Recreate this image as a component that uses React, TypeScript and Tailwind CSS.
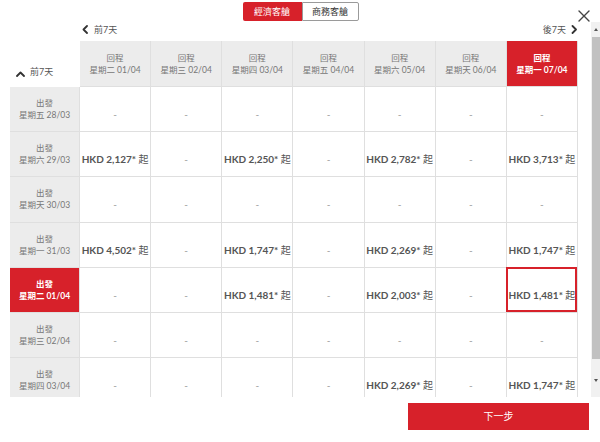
import type { ReactNode } from "react";

const RED = "bg-[#d7212a]";

const returnDates = ["星期二 01/04", "星期三 02/04", "星期四 03/04", "星期五 04/04", "星期六 05/04", "星期天 06/04", "星期一 07/04"];

const rows: { date: string; prices: (string | null)[] }[] = [
  { date: "星期五 28/03", prices: [null, null, null, null, null, null, null] },
  { date: "星期六 29/03", prices: ["2,127", null, "2,250", null, "2,782", null, "3,713"] },
  { date: "星期天 30/03", prices: [null, null, null, null, null, null, null] },
  { date: "星期一 31/03", prices: ["4,502", null, "1,747", null, "2,269", null, "1,747"] },
  { date: "星期二 01/04", prices: [null, null, "1,481", null, "2,003", null, "1,481"] },
  { date: "星期三 02/04", prices: [null, null, null, null, null, null, null] },
  { date: "星期四 03/04", prices: [null, null, null, null, "2,269", null, "1,747"] },
];

const SELECTED_ROW = 4;
const SELECTED_COL = 6;

function Chevron({ dir }: { dir: "left" | "right" | "up" }) {
  const pts = dir === "left" ? "5,1 1.5,4.5 5,8" : dir === "right" ? "1.5,1 5,4.5 1.5,8" : "1,5 4.5,1.5 8,5";
  const w = dir === "up" ? 9 : 7;
  const h = dir === "up" ? 7 : 9;
  return (
    <svg width={w} height={h} viewBox={`0 0 ${w} ${h}`} className="shrink-0">
      <polyline points={pts} fill="none" stroke="#333" strokeWidth="1.8" strokeLinecap="round" strokeLinejoin="round" />
    </svg>
  );
}

function Cell({ children, className = "" }: { children?: ReactNode; className?: string }) {
  return (
    <div className={`box-border flex flex-col items-center border-r border-b border-[#dfdfdf] ${className}`}>
      {children}
    </div>
  );
}

export default function App() {
  return (
    <div
      className="relative w-[600px] h-[442px] overflow-hidden bg-white text-[#666]"
      style={{ fontFamily: "Lato, 'Noto Sans CJK TC', sans-serif" }}
    >
      {/* cabin tabs */}
      <div className="flex h-[22px] justify-center pt-[2px] pl-[1px]">
        <div className={`flex h-[19px] w-[59px] items-center justify-center rounded-l-[2px] ${RED} text-[9px] text-white`}>經濟客艙</div>
        <div className="box-border flex h-[19px] w-[57px] items-center justify-center rounded-r-[2px] border border-[#9a9a9a] bg-white text-[9px] text-[#333]">商務客艙</div>
      </div>

      <button className="absolute right-[10px] top-[10px] h-[12px] w-[12px]" aria-label="close">
        <svg width="12" height="12" viewBox="0 0 12 12">
          <path d="M1 1 L11 11 M11 1 L1 11" stroke="#444" strokeWidth="1.4" strokeLinecap="round" />
        </svg>
      </button>

      <div className="flex h-[375px]">
        <div className="flex-1 overflow-hidden pl-[10px]">
          {/* week navigation */}
          <div className="flex h-[19px] w-[568px] items-center pb-[4px]">
            <div className="w-[72px]" />
            <div className="flex flex-1 items-center justify-between text-[9px] text-[#555]">
              <div className="flex items-center gap-[5px]">
                <Chevron dir="left" />
                <span>前7天</span>
              </div>
              <div className="flex items-center gap-[5px]">
                <span>後7天</span>
                <Chevron dir="right" />
              </div>
            </div>
          </div>

          <div className="grid w-[568px] grid-cols-[70px_repeat(7,1fr)]">
            {/* header row */}
            <div className="flex h-[46px] items-end gap-[5px] pb-[9px] pl-[6px] text-[9px] text-[#555]">
              <Chevron dir="up" />
              <span>前7天</span>
            </div>
            {returnDates.map((d, i) => {
              const sel = i === SELECTED_COL;
              return (
                <Cell
                  key={d}
                  className={`h-[46px] justify-center text-[8.5px] leading-[12px] ${sel ? `${RED} font-bold text-white border-[#d7212a]` : "bg-[#ececec] text-[#777]"}`}
                >
                  <span>回程</span>
                  <span>{d}</span>
                </Cell>
              );
            })}

            {/* body rows */}
            {rows.map((r, ri) => {
              const selRow = ri === SELECTED_ROW;
              return [
                <Cell
                  key={`h${ri}`}
                  className={`h-[45.2px] justify-center text-[8.5px] leading-[12px] ${selRow ? `${RED} font-bold text-white` : "bg-[#ececec] text-[#777]"}`}
                >
                  <span>出發</span>
                  <span>{r.date}</span>
                </Cell>,
                ...r.prices.map((p, ci) => {
                  const sel = selRow && ci === SELECTED_COL;
                  return (
                    <Cell key={`${ri}-${ci}`} className="relative h-[45.2px] justify-center bg-white pt-[11px]">
                      {p ? (
                        <span className="whitespace-nowrap text-[10px] font-bold text-[#555]">
                          HKD {p}* <span className="font-normal">起</span>
                        </span>
                      ) : (
                        <span className="text-[10px] text-[#999]">-</span>
                      )}
                      {sel && <div className="absolute -left-px -top-px right-0 bottom-0 border-2 border-[#d7212a]" />}
                    </Cell>
                  );
                }),
              ];
            })}
          </div>
        </div>

        {/* scrollbar */}
        <div className="flex w-[9px] flex-col bg-[#f1f1f1]">
          <div className="flex h-[15px] items-center justify-center">
            <div className="h-0 w-0 border-x-[2.5px] border-b-[3px] border-x-transparent border-b-[#555]" />
          </div>
          <div className="ml-[1px] h-[322px] bg-[#c1c1c1]" />
          <div className="flex flex-1 items-center justify-center pt-[5px]">
            <div className="h-0 w-0 border-x-[2.5px] border-t-[3px] border-x-transparent border-t-[#555]" />
          </div>
        </div>
      </div>

      {/* next */}
      <div className="flex justify-end pr-[11px] pt-[6px]">
        <button className={`h-[27px] w-[181px] ${RED} text-[10px] text-white`}>下一步</button>
      </div>
    </div>
  );
}
